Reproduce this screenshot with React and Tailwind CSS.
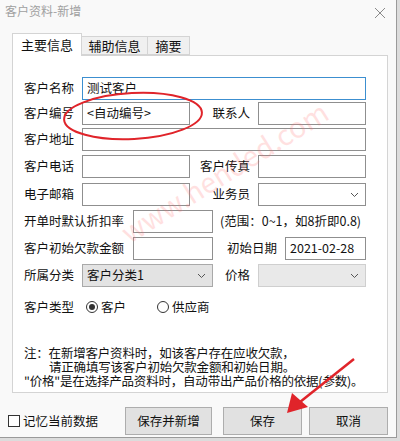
import React from "react";

const font = { fontFamily: '"Noto Sans CJK SC", "Noto Sans", sans-serif' };

function Input({ w, value, focused }) {
  return (
    <div
      className={`h-[23px] shrink-0 flex items-center px-[4px] bg-white border ${
        focused ? "border-[#3c8fd0]" : "border-[#8f8f8f]"
      }`}
      style={{ width: w }}
    >
      <span className="leading-none whitespace-nowrap">{value}</span>
    </div>
  );
}

function Select({ w, value, variant = "white" }) {
  const skin =
    variant === "gray"
      ? "bg-[#e3e3e3] border-[#a9a9a9]"
      : variant === "disabled"
      ? "bg-[#e9e9e9] border-[#cfcfcf]"
      : "bg-white border-[#8f8f8f]";
  return (
    <div
      className={`h-[23px] shrink-0 flex items-center justify-between pl-[4px] pr-[6px] border ${skin}`}
      style={{ width: w }}
    >
      <span className="leading-none whitespace-nowrap">{value}</span>
      <svg width="9" height="6" viewBox="0 0 9 6">
        <path d="M1 1 L4.5 4.5 L8 1" fill="none" stroke="#555" strokeWidth="1" />
      </svg>
    </div>
  );
}

function Label({ w, children, right }) {
  return (
    <div
      className={`shrink-0 leading-none whitespace-nowrap ${right ? "text-right pr-[8px]" : ""}`}
      style={{ width: w }}
    >
      {children}
    </div>
  );
}

export default function App() {
  return (
    <div className="w-[400px] h-[441px] bg-[#dcdcdc] text-[12.5px] text-[#111]" style={font}>
      <div className="relative w-[397px] h-[438px] bg-[#f9f9f9] border-r border-b border-[#9a9a9a] flex flex-col">
        {/* title bar */}
        <div className="h-[33px] flex items-start justify-between pl-[5px] pr-[10px] pt-[5px]">
          <span className="text-[12px] text-[#a0a0a0] leading-none">客户资料-新增</span>
          <svg width="12" height="12" viewBox="0 0 12 12" className="mt-[2px]">
            <path d="M1 1 L11 11 M11 1 L1 11" stroke="#8a8a8a" strokeWidth="1" />
          </svg>
        </div>

        {/* tabs */}
        <div className="h-[22px] pl-[12px] flex items-end relative z-10">
          <div className="h-[23px] w-[70px] bg-white border border-b-0 border-[#d4d4d4] flex items-center justify-center text-[13px] -mb-[1px]">
            主要信息
          </div>
          <div className="h-[19px] w-[66px] bg-[#f0f0f0] border border-l-0 border-[#d4d4d4] flex items-center justify-center text-[13px]">
            辅助信息
          </div>
          <div className="h-[19px] w-[42px] bg-[#f0f0f0] border border-l-0 border-[#d4d4d4] flex items-center justify-center text-[13px]">
            摘要
          </div>
        </div>

        {/* panel */}
        <div className="ml-[12px] w-[376px] h-[338px] bg-white border border-[#d4d4d4] pl-[11px] pt-[21px] flex flex-col">
          <div className="flex items-center">
            <Label w={58}>客户名称</Label>
            <Input w={284} value="测试客户" focused />
          </div>
          <div className="flex items-center mt-[2px]">
            <Label w={58}>客户编号</Label>
            <Input w={108} value="<自动编号>" />
            <Label w={68} right>联系人</Label>
            <Input w={108} />
          </div>
          <div className="flex items-center mt-[3px]">
            <Label w={58}>客户地址</Label>
            <Input w={284} />
          </div>
          <div className="flex items-center mt-[4px]">
            <Label w={58}>客户电话</Label>
            <Input w={108} />
            <Label w={68} right>客户传真</Label>
            <Input w={108} />
          </div>
          <div className="flex items-center mt-[5px]">
            <Label w={58}>电子邮箱</Label>
            <Input w={108} />
            <Label w={68} right>业务员</Label>
            <Select w={108} />
          </div>
          <div className="flex items-center mt-[4px]">
            <Label w={109}>开单时默认折扣率</Label>
            <Input w={80} />
            <span className="ml-[7px] leading-none whitespace-nowrap">(范围：0~1，如8折即0.8)</span>
          </div>
          <div className="flex items-center mt-[4px]">
            <Label w={109}>客户初始欠款金额</Label>
            <Input w={80} />
            <Label w={72} right>初始日期</Label>
            <Input w={81} value="2021-02-28" />
          </div>
          <div className="flex items-center mt-[4px]">
            <Label w={58}>所属分类</Label>
            <Select w={131} value="客户分类1" variant="gray" />
            <Label w={45} right>价格</Label>
            <Select w={108} variant="disabled" />
          </div>
          <div className="flex items-center mt-[11px] h-[18px]">
            <Label w={62}>客户类型</Label>
            <span className="w-[12px] h-[12px] rounded-full border border-[#333] flex items-center justify-center">
              <span className="w-[6px] h-[6px] rounded-full bg-[#333]" />
            </span>
            <span className="ml-[3px] w-[56px] leading-none">客户</span>
            <span className="w-[12px] h-[12px] rounded-full border border-[#333]" />
            <span className="ml-[3px] leading-none">供应商</span>
          </div>
          <div className="mt-[30px] leading-[14px] flex flex-col whitespace-nowrap tracking-[-0.2px]">
            <span>注：在新增客户资料时，如该客户存在应收欠款，</span>
            <span className="pl-[25px]">请正确填写该客户初始欠款金额和初始日期。</span>
            <span>"价格"是在选择产品资料时，自动带出产品价格的依据(参数)。</span>
          </div>
        </div>

        {/* bottom */}
        <div className="flex items-center pt-[14px] pl-[8px]">
          <span className="w-[12px] h-[12px] border border-[#333] bg-white" />
          <span className="ml-[3px] w-[102px] leading-none whitespace-nowrap">记忆当前数据</span>
          <button className="w-[87px] h-[28px] bg-[#e1e1e1] border border-[#adadad]">保存并新增</button>
          <button className="ml-[11px] w-[79px] h-[28px] bg-[#e1e1e1] border border-[#adadad]">保存</button>
          <button className="ml-[7px] w-[79px] h-[28px] bg-[#e1e1e1] border border-[#adadad]">取消</button>
        </div>

        {/* watermark */}
        <div className="absolute left-[105px] top-[150px] -rotate-[32deg] text-[28px] text-[#ff6b6b] opacity-20 pointer-events-none whitespace-nowrap">
          www.hended.com
        </div>

        {/* annotations */}
        <svg className="absolute left-0 top-0 pointer-events-none" width="397" height="438">
          <ellipse cx="133" cy="116" rx="69" ry="23" fill="none" stroke="#e0242a" strokeWidth="2" transform="rotate(-3 133 116)" />
          <line x1="354" y1="359" x2="300" y2="402" stroke="#e0242a" strokeWidth="2.5" />
          <polygon points="287,413 292,393 308,407" fill="#e0242a" />
        </svg>
      </div>
    </div>
  );
}
